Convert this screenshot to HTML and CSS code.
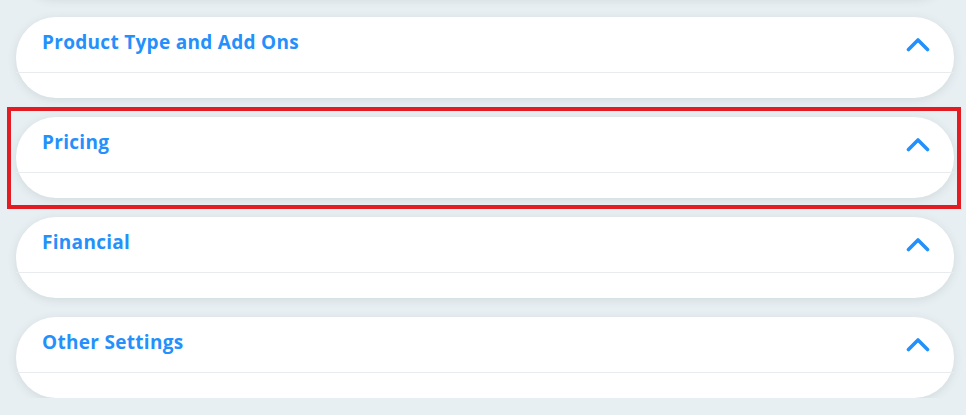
FILE: index.html
```html
<!DOCTYPE html>
<html>

<head>
  <meta charset="UTF-8">
  <title>Settings</title>
  <link rel="stylesheet" href="styles.css">
</head>

<body>
  <div class="sections">
    <div class="section">
      <div class="section-head"></div>
      <div class="section-body"></div>
    </div>

    <div class="section">
      <div class="section-head">
        <span class="section-title">Product Type and Add Ons</span>
        <svg class="chevron" width="24" height="15" viewBox="0 0 24 15">
          <path d="M2.5 12.5 L12 3 L21.5 12.5" />
        </svg>
      </div>
      <div class="section-body"></div>
    </div>

    <div class="section selected">
      <div class="section-head">
        <span class="section-title">Pricing</span>
        <svg class="chevron" width="24" height="15" viewBox="0 0 24 15">
          <path d="M2.5 12.5 L12 3 L21.5 12.5" />
        </svg>
      </div>
      <div class="section-body"></div>
    </div>

    <div class="section">
      <div class="section-head">
        <span class="section-title">Financial</span>
        <svg class="chevron" width="24" height="15" viewBox="0 0 24 15">
          <path d="M2.5 12.5 L12 3 L21.5 12.5" />
        </svg>
      </div>
      <div class="section-body"></div>
    </div>

    <div class="section">
      <div class="section-head">
        <span class="section-title">Other Settings</span>
        <svg class="chevron" width="24" height="15" viewBox="0 0 24 15">
          <path d="M2.5 12.5 L12 3 L21.5 12.5" />
        </svg>
      </div>
      <div class="section-body"></div>
    </div>
  </div>
</body>

</html>
```

FILE: styles.css
```css
body {
  margin: 0;
  background: #e8eff2;
  font-family: "Open Sans", sans-serif;
  overflow: hidden;
}

.sections {
  display: flex;
  flex-direction: column;
  gap: 19px;
  margin-top: -83px;
  padding: 0 12px 0 16px;
}

.section {
  position: relative;
  height: 81px;
  background: #ffffff;
  border-radius: 40px;
  box-shadow: 0 2px 10px rgba(40, 70, 90, 0.12);
}

.section-head {
  display: flex;
  align-items: center;
  justify-content: space-between;
  height: 55px;
  padding: 0 24px 0 26px;
  border-bottom: 1px solid #e8ecee;
}

.section-title {
  margin-bottom: 5px;
  font-size: 19px;
  font-weight: 700;
  letter-spacing: 0.3px;
  color: #2490fb;
}

.chevron {
  fill: none;
  stroke: #2490fb;
  stroke-width: 3.6;
  stroke-linecap: round;
  stroke-linejoin: round;
}

.selected::after {
  content: "";
  position: absolute;
  top: -10px;
  left: -9px;
  right: -7px;
  bottom: -11px;
  border: 4px solid #e31c24;
}
```
